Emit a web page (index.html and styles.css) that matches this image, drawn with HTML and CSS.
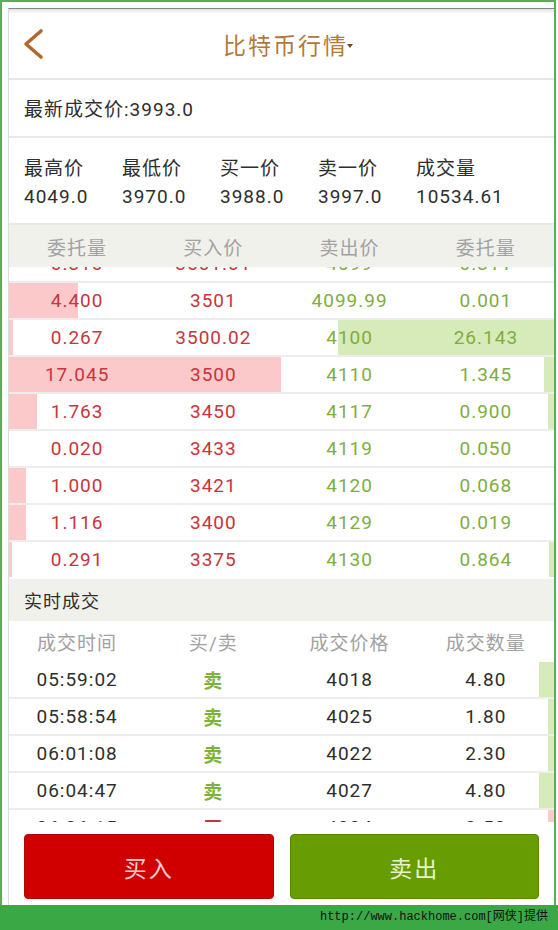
FILE: index.html
```html
<!DOCTYPE html>
<html lang="zh">
<head>
    <meta charset="UTF-8">
    <title>比特币行情</title>
    <link rel="stylesheet" href="styles.css">
</head>
<body>
<section class="frame">
    <section class="app">
        <header class="topbar">
            <svg class="back" width="22" height="32" viewBox="0 0 22 32">
                <polyline points="19,3 4,16 19,29" fill="none" stroke="#b3682d" stroke-width="3.6" stroke-linecap="round" stroke-linejoin="round"/>
            </svg>
            <h1 class="title">比特币行情<span class="caret"></span></h1>
            <span></span>
        </header>

        <div class="latest">最新成交价:3993.0</div>

        <div class="stats">
            <div class="stat"><div>最高价</div><div>4049.0</div></div>
            <div class="stat"><div>最低价</div><div>3970.0</div></div>
            <div class="stat"><div>买一价</div><div>3988.0</div></div>
            <div class="stat"><div>卖一价</div><div>3997.0</div></div>
            <div class="stat"><div>成交量</div><div>10534.61</div></div>
        </div>

        <div class="ob-head cols">
            <span>委托量</span><span>买入价</span><span>卖出价</span><span>委托量</span>
        </div>
        <div class="ob-window">
            <div class="ob-row cols first">
                <span class="bid">0.310</span><span class="bid">3501.01</span><span class="ask">4099</span><span class="ask">0.311</span>
            </div>
            <div class="ob-row cols" style="--buy:69px;--sell:0px">
                <span class="bid">4.400</span><span class="bid">3501</span><span class="ask">4099.99</span><span class="ask">0.001</span>
            </div>
            <div class="ob-row cols" style="--buy:4px;--sell:216px">
                <span class="bid">0.267</span><span class="bid">3500.02</span><span class="ask">4100</span><span class="ask">26.143</span>
            </div>
            <div class="ob-row cols" style="--buy:272px;--sell:10px">
                <span class="bid">17.045</span><span class="bid">3500</span><span class="ask">4110</span><span class="ask">1.345</span>
            </div>
            <div class="ob-row cols" style="--buy:28px;--sell:6px">
                <span class="bid">1.763</span><span class="bid">3450</span><span class="ask">4117</span><span class="ask">0.900</span>
            </div>
            <div class="ob-row cols" style="--buy:0px;--sell:0px">
                <span class="bid">0.020</span><span class="bid">3433</span><span class="ask">4119</span><span class="ask">0.050</span>
            </div>
            <div class="ob-row cols" style="--buy:17px;--sell:0px">
                <span class="bid">1.000</span><span class="bid">3421</span><span class="ask">4120</span><span class="ask">0.068</span>
            </div>
            <div class="ob-row cols" style="--buy:17px;--sell:0px">
                <span class="bid">1.116</span><span class="bid">3400</span><span class="ask">4129</span><span class="ask">0.019</span>
            </div>
            <div class="ob-row cols" style="--buy:3px;--sell:5px">
                <span class="bid">0.291</span><span class="bid">3375</span><span class="ask">4130</span><span class="ask">0.864</span>
            </div>
        </div>

        <div class="section-bar">实时成交</div>

        <div class="trade-head cols">
            <span>成交时间</span><span>买/卖</span><span>成交价格</span><span>成交数量</span>
        </div>
        <div class="trade-window">
            <div class="trade-row cols" style="--sell:15px">
                <span>05:59:02</span><span class="side-sell">卖</span><span>4018</span><span>4.80</span>
            </div>
            <div class="trade-row cols" style="--sell:6px">
                <span>05:58:54</span><span class="side-sell">卖</span><span>4025</span><span>1.80</span>
            </div>
            <div class="trade-row cols" style="--sell:6px">
                <span>06:01:08</span><span class="side-sell">卖</span><span>4022</span><span>2.30</span>
            </div>
            <div class="trade-row cols" style="--sell:15px">
                <span>06:04:47</span><span class="side-sell">卖</span><span>4027</span><span>4.80</span>
            </div>
            <div class="trade-row cols buyside" style="--sell:6px">
                <span>06:06:15</span><span class="side-buy">买</span><span>4024</span><span>0.50</span>
            </div>
        </div>

        <div class="actions">
            <button class="btn buy">买入</button>
            <button class="btn sell">卖出</button>
        </div>
    </section>
</section>
<div class="credit">http://www.hackhome.com[网侠]提供</div>
</body>
</html>
```

FILE: styles.css
```css
* {
    box-sizing: border-box;
}

body {
    margin: 0;
    width: 558px;
    background: #fff;
    font-family: Roboto, "Noto Sans CJK SC", sans-serif;
    color: #2e2e2e;
}

.frame {
    width: 556px;
    height: 905px;
    padding: 6px 0 0 6px;
    border: 2px solid #5aab5a;
    border-bottom: none;
}

.app {
    display: flex;
    flex-direction: column;
    height: 897px;
    border-top: 1px solid #858585;
    border-left: 1px solid #dcdcdc;
    overflow: hidden;
}

/* top bar */
.topbar {
    display: grid;
    grid-template-columns: 1fr auto 1fr;
    align-items: center;
    height: 71px;
    flex: none;
    padding-left: 13px;
    background: linear-gradient(#e2e2e2, #fff 5px);
    border-bottom: 2px solid #e6e6e6;
}

.title {
    margin: 0;
    font-size: 23px;
    font-weight: normal;
    letter-spacing: 2px;
    color: #b27a3a;
}

.caret {
    display: inline-block;
    width: 0;
    height: 0;
    margin-left: -1px;
    vertical-align: 6px;
    border-left: 3px solid transparent;
    border-right: 3px solid transparent;
    border-top: 4px solid #6d4a2a;
}

.latest {
    height: 58px;
    flex: none;
    padding: 3px 0 0 15px;
    line-height: 53px;
    font-size: 19px;
    letter-spacing: 1px;
    border-bottom: 2px solid #e8e8e8;
}

.stats {
    display: grid;
    grid-template-columns: repeat(5, 98px);
    height: 87px;
    flex: none;
    padding: 17px 0 0 15px;
    line-height: 28px;
    font-size: 19px;
    letter-spacing: 1px;
    border-bottom: 2px solid #e8e8e8;
}

/* order book */
.cols {
    display: grid;
    grid-template-columns: repeat(4, 1fr);
    align-items: center;
    text-align: center;
    font-size: 19px;
    letter-spacing: 1px;
}

.ob-head {
    height: 42px;
    flex: none;
    background: #f1f1ec;
    color: #a2a2a2;
}

.ob-window {
    height: 312px;
    flex: none;
    overflow: hidden;
}

.ob-row {
    height: 37px;
    border-top: 2px solid #ededed;
    background:
        linear-gradient(to right, #fbc9c9 var(--buy), transparent var(--buy)),
        linear-gradient(to left, #d6ebb9 var(--sell), transparent var(--sell)),
        #fff;
    background-clip: padding-box;
}

.ob-row.first {
    height: 35px;
    margin-top: -21px;
    border-top: none;
}

.bid {
    color: #c8353b;
}

.ask {
    color: #80ad3f;
}

.section-bar {
    height: 42px;
    flex: none;
    padding: 2px 0 0 15px;
    line-height: 42px;
    font-size: 18px;
    letter-spacing: 1px;
    background: #f1f1ec;
}

/* trades */
.trade-head {
    height: 41px;
    flex: none;
    color: #a2a2a2;
}

.trade-window {
    height: 160px;
    flex: none;
    overflow: hidden;
}

.trade-row {
    height: 37px;
    border-bottom: 2px solid #ededed;
    background:
        linear-gradient(to left, #d6ebb9 var(--sell), transparent var(--sell)),
        #fff;
    background-clip: padding-box;
}

.trade-row.buyside {
    background:
        linear-gradient(to left, #fbc9c9 var(--sell), transparent var(--sell)),
        #fff;
}

.side-sell {
    color: #7db33a;
    font-weight: bold;
}

.side-buy {
    color: #c8353b;
    font-weight: bold;
}

/* buttons */
.actions {
    display: flex;
    gap: 16px;
    flex: none;
    height: 83px;
    padding: 12px 15px 6px 15px;
    background: #fff;
}

.btn {
    flex: 1;
    height: 65px;
    border-radius: 4px;
    font-family: Roboto, "Noto Sans CJK SC", sans-serif;
    font-size: 23px;
    letter-spacing: 2px;
    cursor: pointer;
}

.buy {
    background: #d10000;
    border: 1px solid #a90a0a;
    color: #f9d0d0;
}

.sell {
    background: #679c02;
    border: 1px solid #568a00;
    color: #e6f4c6;
}

.credit {
    height: 25px;
    padding-right: 10px;
    line-height: 25px;
    text-align: right;
    background: #39a845;
    color: #111;
    font-family: "Liberation Mono", "Noto Sans CJK SC", monospace;
    font-size: 12px;
}
```
